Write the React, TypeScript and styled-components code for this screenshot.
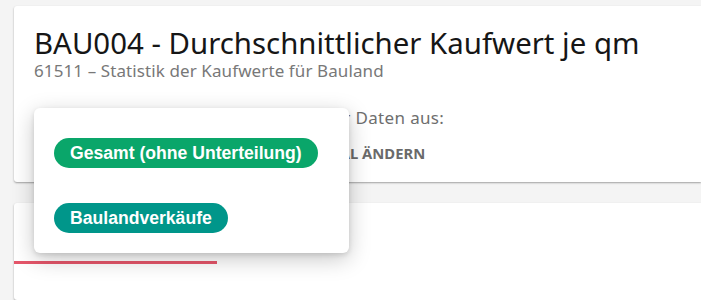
import React from 'react'
import styled, { createGlobalStyle } from 'styled-components'

const GlobalStyle = createGlobalStyle`
    html, body {
        margin: 0;
        padding: 0;
        background: #f4f4f4;
        overflow: hidden;
    }
`

const Page = styled.div`
    position: relative;
    display: flex;
    flex-direction: column;
    gap: 21px;
    padding: 6px 0 0 14px;
    height: 300px;
    box-sizing: border-box;
    font-family: 'Noto Sans', sans-serif;
`

const Card = styled.div`
    background: #ffffff;
    border-radius: 3px 0 0 3px;
    box-shadow: 0 1px 2px rgba(0, 0, 0, 0.35);
`

const HeaderCard = styled(Card)`
    height: 176px;
    box-sizing: border-box;
    padding: 20px 20px 0;
`

const Title = styled.h1`
    margin: 0;
    font-size: 29.4px;
    line-height: 35px;
    font-weight: 400;
    color: #161616;
`

const Subtitle = styled.div`
    font-size: 17px;
    line-height: 20px;
    letter-spacing: 0.1px;
    color: #787878;
`

const SelectRow = styled.div`
    margin-top: 26px;
    display: flex;
    flex-direction: column;
    gap: 14px;
`

const Hint = styled.div`
    font-size: 17px;
    line-height: 22px;
    letter-spacing: 0.35px;
    color: #6e6e6e;
    white-space: nowrap;
`

const ChangeButton = styled.div`
    font-size: 14.8px;
    line-height: 20px;
    font-weight: 700;
    letter-spacing: 0px;
    text-transform: uppercase;
    color: #6a6a6a;
    white-space: nowrap;
`

const TabCard = styled(Card)`
    flex: 1;
`

const TabBar = styled.div`
    display: flex;
    padding-top: 26px;
`

const Tab = styled.div<{ $active?: boolean }>`
    width: 203px;
    height: 35px;
    box-sizing: border-box;
    padding: 2px 0 0 24px;
    font-size: 15px;
    line-height: 20px;
    color: #333;
    border-bottom: 3px solid ${props => (props.$active ? '#e5566a' : 'transparent')};
`

const Menu = styled.div`
    position: absolute;
    left: 34px;
    top: 108px;
    width: 315px;
    box-sizing: border-box;
    display: flex;
    flex-direction: column;
    align-items: flex-start;
    gap: 35px;
    padding: 30px 20px 20px;
    background: #ffffff;
    border-radius: 6px;
    box-shadow: 0 6px 22px rgba(0, 0, 0, 0.22), 0 2px 5px rgba(0, 0, 0, 0.12);
`

const Chip = styled.div<{ $color: string }>`
    height: 30px;
    line-height: 30px;
    padding: 0 16px;
    border-radius: 15px;
    background: ${props => props.$color};
    color: #ffffff;
    font-family: 'Liberation Sans', Arial, sans-serif;
    font-weight: 700;
    font-size: 17.6px;
    white-space: nowrap;
`

const options = [
    { label: 'Gesamt (ohne Unterteilung)', color: '#0aa66a' },
    { label: 'Baulandverkäufe', color: '#00968a' },
]

const App: React.FC = () => {
    return (
        <>
            <GlobalStyle />
            <Page>
                <HeaderCard>
                    <Title>{'BAU004 - Durchschnittlicher Kaufwert je qm'}</Title>
                    <Subtitle>{'61511 – Statistik der Kaufwerte für Bauland'}</Subtitle>
                    <SelectRow>
                        <Hint>{'Bitte wählen Sie eine Unterteilung der Daten aus:'}</Hint>
                        <ChangeButton>{'Unterteilung der Daten nach Merkmal ändern'}</ChangeButton>
                    </SelectRow>
                </HeaderCard>
                <TabCard>
                    <TabBar>
                        <Tab $active>{'Tabelle'}</Tab>
                        <Tab>{'Diagramm'}</Tab>
                    </TabBar>
                </TabCard>
                <Menu>
                    {options.map((o, i) => (
                        <Chip key={i} $color={o.color}>
                            {o.label}
                        </Chip>
                    ))}
                </Menu>
            </Page>
        </>
    )
}

export default App
